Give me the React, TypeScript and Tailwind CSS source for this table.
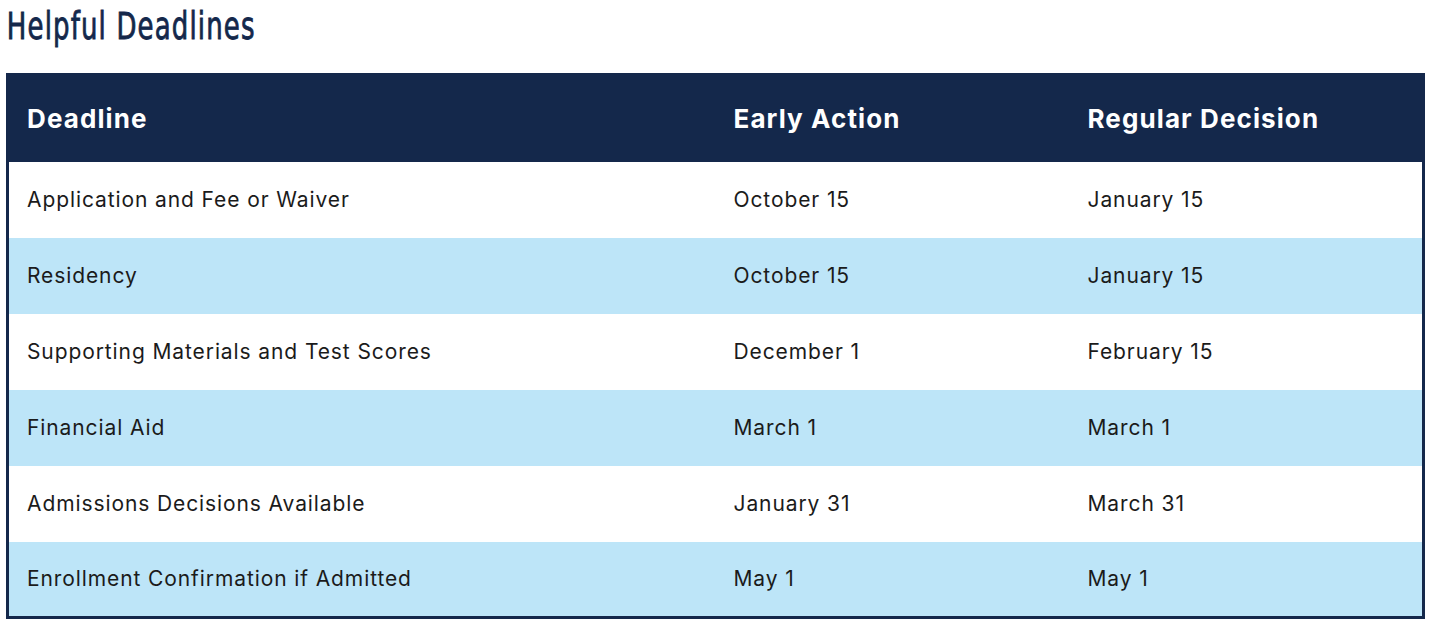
import React from 'react';

const rows = [
	{ name: 'Application and Fee or Waiver', early: 'October 15', regular: 'January 15' },
	{ name: 'Residency', early: 'October 15', regular: 'January 15' },
	{ name: 'Supporting Materials and Test Scores', early: 'December 1', regular: 'February 15' },
	{ name: 'Financial Aid', early: 'March 1', regular: 'March 1' },
	{ name: 'Admissions Decisions Available', early: 'January 31', regular: 'March 31' },
	{ name: 'Enrollment Confirmation if Admitted', early: 'May 1', regular: 'May 1' },
];

const App = () => {
	return (
		<div className="w-[1431px] h-[627px] bg-white pl-[6px] pr-[6px] font-['Inter',sans-serif]">
			<div className="h-[73px] pt-[7px]">
				<h2 className="inline-block origin-left scale-x-[0.78] pl-px text-[37px] leading-[40px] font-normal font-stretch-condensed tracking-[1.5px] text-[#14284b] [-webkit-text-stroke:0.8px_#14284b] font-['DejaVu_Sans',sans-serif]">
					Helpful Deadlines
				</h2>
			</div>
			<table className="w-[1419px] table-fixed border-collapse border-[3px] border-[#14284b]">
				<colgroup>
					<col className="w-1/2" />
					<col className="w-1/4" />
					<col className="w-1/4" />
				</colgroup>
				<thead>
					<tr className="h-[87px] bg-[#14284b] text-white">
						<th className="pl-[18px] text-left text-[26px] font-bold tracking-[1.1px]">Deadline</th>
						<th className="pl-[18px] text-left text-[26px] font-bold tracking-[1.1px]">Early Action</th>
						<th className="pl-[18px] text-left text-[26px] font-bold tracking-[1.1px]">Regular Decision</th>
					</tr>
				</thead>
				<tbody>
					{rows.map((row, i) => (
						<tr key={row.name} className={`h-[76px] text-[21px] text-[#1b1b1b] tracking-[0.9px] ${i % 2 === 1 ? 'bg-[#bde5f8]' : 'bg-white'}`}>
							<td className="pl-[18px]">{row.name}</td>
							<td className="pl-[18px]">{row.early}</td>
							<td className="pl-[18px]">{row.regular}</td>
						</tr>
					))}
				</tbody>
			</table>
		</div>
	);
};

export default App;
